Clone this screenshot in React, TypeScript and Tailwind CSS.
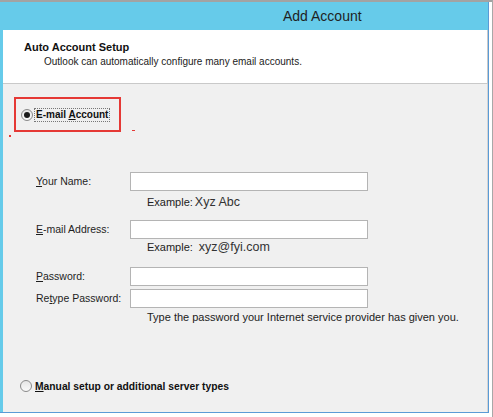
import React from 'react';

const Radio: React.FC<{ checked?: boolean }> = ({ checked }) => (
    <span className="w-[12px] h-[12px] rounded-full border border-[#8a8a8a] bg-gradient-to-b from-[#e6e6e6] to-[#fafafa] flex items-center justify-center shrink-0">
        {checked && <span className="w-[6px] h-[6px] rounded-full bg-[#1a1a1a]" />}
    </span>
);

const Field: React.FC<{ children: React.ReactNode; mt?: string }> = ({ children, mt = '' }) => (
    <div className={`flex items-center h-[19px] ${mt}`}>
        <div className="w-[94px] shrink-0 text-[10.5px] text-[#1e1e1e]">{children}</div>
        <div className="w-[238px] h-[19px] bg-white border border-[#b4b4b4]" />
    </div>
);

const App: React.FC = () => {
    return (
        <div className="w-[493px] h-[417px] bg-white flex flex-col font-['Liberation_Sans',sans-serif] overflow-hidden border-r border-[#a8a8a8]">
            <div className="h-[2px] bg-[#a3a3a3] shrink-0" />
            <div className="flex-1 flex flex-col pr-[3px] pb-[4px]">
                <div className="flex-1 flex flex-col bg-[#66cbea] pl-[3px] border-r border-b border-[#5a9bd6]">
                    {/* title bar */}
                    <div className="h-[28px] shrink-0 flex items-center pl-[280px] text-[14px] text-[#1f1f1f]">
                        Add Account
                    </div>

                    {/* header */}
                    <div className="h-[54px] shrink-0 bg-white border-b border-r border-[#c9c9c9] pl-[21px] pt-[10px]">
                        <div className="text-[11px] leading-[14px] font-bold text-[#111]">Auto Account Setup</div>
                        <div className="text-[10px] leading-[14px] text-[#222] pl-[20px] mt-[1px]">Outlook can automatically configure many email accounts.</div>
                    </div>

                    {/* body */}
                    <div className="flex-1 bg-[#f0f0f0] border-r border-[#d4d4d4] relative flex flex-col">
                        <div className="ml-[11px] mt-[13px] w-[107px] h-[35px] border-2 border-[#e53935] flex items-center pl-[5px]">
                            <Radio checked />
                            <span className="ml-[1px] px-[1px] border border-dotted border-[#777] text-[10px] font-bold text-[#111] leading-[12px]">
                                E-mail <span className="underline">A</span>ccount
                            </span>
                        </div>
                        <span className="absolute left-[6px] top-[51px] w-[2px] h-[2px] bg-[#e53935]" />
                        <span className="absolute left-[129px] top-[46px] w-[3px] h-[1px] bg-[#e53935]" />

                        <div className="ml-[33px] mt-[40px] flex flex-col">
                            <Field><span className="underline">Y</span>our Name:</Field>
                            <div className="ml-[111px] mt-[2px] text-[11px] text-[#222] flex items-center h-[18px]">
                                Example:<span className="ml-[2px] text-[12.5px] text-[#333]">Xyz Abc</span>
                            </div>
                            <Field mt="mt-[9px]"><span className="underline">E</span>-mail Address:</Field>
                            <div className="ml-[111px] text-[11px] text-[#222] flex items-center h-[16px]">
                                Example:<span className="ml-[6px] text-[12.5px] text-[#333]">xyz@fyi.com</span>
                            </div>
                            <Field mt="mt-[12px]"><span className="underline">P</span>assword:</Field>
                            <Field mt="mt-[3px]">Re<span className="underline">t</span>ype Password:</Field>
                            <div className="ml-[111px] mt-[3px] text-[11px] leading-[13px] text-[#222]">
                                Type the password your Internet service provider has given you.
                            </div>
                        </div>

                        <div className="mt-auto mb-[18px] ml-[17px] flex items-center">
                            <Radio />
                            <span className="ml-[3px] text-[10.3px] font-bold text-[#111]">
                                <span className="underline">M</span>anual setup or additional server types
                            </span>
                        </div>
                    </div>
                </div>
            </div>
        </div>
    );
};

export default App;
